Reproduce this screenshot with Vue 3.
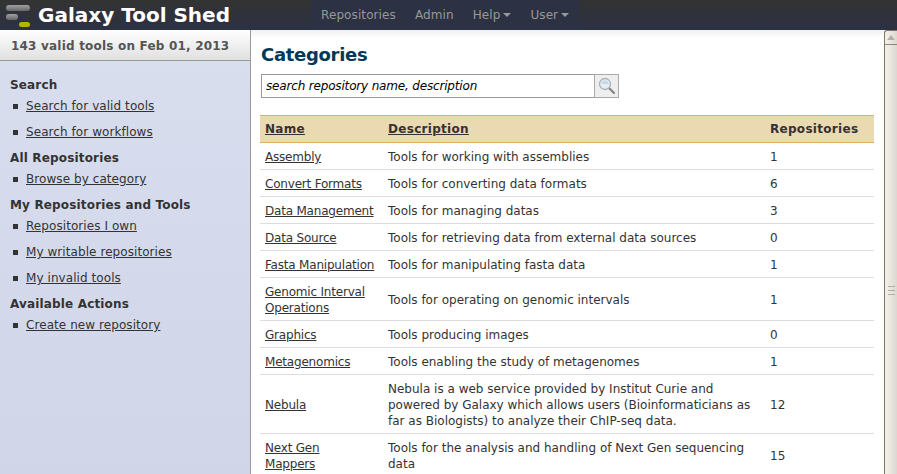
<script setup>
// sidebar groups
const groups = [
  { title: 'Search', links: ['Search for valid tools', 'Search for workflows'] },
  { title: 'All Repositories', links: ['Browse by category'] },
  { title: 'My Repositories and Tools', links: ['Repositories I own', 'My writable repositories', 'My invalid tools'] },
  { title: 'Available Actions', links: ['Create new repository'] }
]

// category rows
const categories = [
  { name: 'Assembly', desc: 'Tools for working with assemblies', count: 1 },
  { name: 'Convert Formats', desc: 'Tools for converting data formats', count: 6 },
  { name: 'Data Management', desc: 'Tools for managing datas', count: 3 },
  { name: 'Data Source', desc: 'Tools for retrieving data from external data sources', count: 0 },
  { name: 'Fasta Manipulation', desc: 'Tools for manipulating fasta data', count: 1 },
  { name: 'Genomic Interval Operations', desc: 'Tools for operating on genomic intervals', count: 1 },
  { name: 'Graphics', desc: 'Tools producing images', count: 0 },
  { name: 'Metagenomics', desc: 'Tools enabling the study of metagenomes', count: 1 },
  { name: 'Nebula', desc: 'Nebula is a web service provided by Institut Curie and powered by Galaxy which allows users (Bioinformaticians as far as Biologists) to analyze their ChIP-seq data.', count: 12 },
  { name: 'Next Gen\nMappers', desc: 'Tools for the analysis and handling of Next Gen sequencing data', count: 15 }
]
</script>

<template>
  <div class="page">
    <header class="masthead">
      <div class="brand">
        <svg class="logo" width="32" height="26" viewBox="0 0 32 26">
          <defs>
            <linearGradient id="bar" x1="0" y1="0" x2="0" y2="1">
              <stop offset="0" stop-color="#a0a0a0" />
              <stop offset="1" stop-color="#666666" />
            </linearGradient>
          </defs>
          <rect x="6" y="3" width="24" height="6" rx="3" fill="url(#bar)" />
          <rect x="6" y="12" width="12" height="6" rx="3" fill="url(#bar)" />
          <rect x="19" y="20" width="11" height="5" rx="2.5" fill="#b5b500" />
        </svg>
        <span>Galaxy Tool Shed</span>
      </div>
      <nav class="nav">
        <a>Repositories</a>
        <a>Admin</a>
        <a>Help<i class="caret"></i></a>
        <a>User<i class="caret"></i></a>
      </nav>
    </header>

    <div class="body-row">
      <aside class="sidebar">
        <div class="side-head">143 valid tools on Feb 01, 2013</div>
        <div class="side-body">
          <div v-for="g in groups" :key="g.title" class="group">
            <h4>{{ g.title }}</h4>
            <ul>
              <li v-for="l in g.links" :key="l"><a>{{ l }}</a></li>
            </ul>
          </div>
        </div>
      </aside>

      <main class="center">
        <h2>Categories</h2>
        <div class="search">
          <div class="search-input">search repository name, description</div>
          <div class="search-btn">
            <svg width="20" height="20" viewBox="0 0 20 20">
              <line x1="11.5" y1="11.5" x2="17" y2="17" stroke="#8a8a8a" stroke-width="2.4" stroke-linecap="round" />
              <circle cx="8" cy="8" r="5.5" fill="#e4eef6" stroke="#a5b0b8" stroke-width="1.3" />
              <path d="M4.5 8a3.5 3.5 0 0 1 7 0" fill="#c5d8e8" />
            </svg>
          </div>
        </div>

        <table class="grid">
          <thead>
            <tr>
              <th class="col-name"><a>Name</a></th>
              <th class="col-desc"><a>Description</a></th>
              <th class="col-count">Repositories</th>
            </tr>
          </thead>
          <tbody>
            <tr v-for="c in categories" :key="c.name">
              <td class="name"><a>{{ c.name }}</a></td>
              <td>{{ c.desc }}</td>
              <td>{{ c.count }}</td>
            </tr>
          </tbody>
        </table>
      </main>

      <div class="scrollbar">
        <div class="arrow"><i></i></div>
        <div class="thumb">
          <div class="grip"></div>
        </div>
      </div>
    </div>
  </div>
</template>

<style>
html, body {
  margin: 0;
  height: 100%;
  overflow: hidden;
}
</style>

<style scoped>
.page {
  width: 897px;
  height: 474px;
  overflow: hidden;
  display: flex;
  flex-direction: column;
  font-family: "DejaVu Sans", sans-serif;
  font-size: 12px;
  line-height: 16px;
  color: #333;
  background: #fff;
}

/* top bar */
.masthead {
  flex: none;
  height: 30px;
  display: flex;
  background: linear-gradient(#333333, #2c3143);
}
.brand {
  width: 311px;
  display: flex;
  align-items: center;
  color: #fff;
  font-weight: bold;
  font-size: 20px;
}
.logo {
  margin-right: 6px;
  flex: none;
}
.nav {
  width: 268px;
  display: flex;
  align-items: center;
  padding-left: 10px;
  box-sizing: border-box;
  background: #2c3143;
  color: #999;
  letter-spacing: 0.1px;
}
.nav a {
  margin-right: 19px;
  white-space: nowrap;
}
.caret {
  display: inline-block;
  margin-left: 3px;
  vertical-align: 2px;
  border-left: 4px solid transparent;
  border-right: 4px solid transparent;
  border-top: 4px solid #999;
}

.body-row {
  flex: 1;
  display: flex;
  min-height: 0;
}

/* left panel */
.sidebar {
  flex: none;
  width: 250px;
  border-right: 1px solid #999;
  display: flex;
  flex-direction: column;
  background: linear-gradient(#d8deee, #d0d6e8);
}
.side-head {
  height: 30px;
  line-height: 33px;
  padding-left: 11px;
  border-bottom: 1px solid #999;
  background: linear-gradient(#ffffff, #e0e0e0);
  font-weight: bold;
  color: #555;
  letter-spacing: 0.2px;
}
.side-body {
  padding-top: 16px;
}
.group h4 {
  margin: 0 0 5px 10px;
  font-size: 12px;
  line-height: 16px;
  font-weight: bold;
  letter-spacing: 0.16px;
}
.group ul {
  list-style: none;
  margin: 0 0 10px;
  padding: 0;
}
.group li {
  position: relative;
  padding-left: 26px;
  margin-bottom: 10px;
  letter-spacing: 0.07px;
}
.group li:last-child {
  margin-bottom: 0;
}
.group li::before {
  content: "";
  position: absolute;
  left: 13px;
  top: 6px;
  width: 5px;
  height: 5px;
  background: #333;
}
.group a {
  text-decoration: underline;
}

/* main content */
.center {
  flex: 1;
  min-width: 0;
  padding: 0 10px;
  background: linear-gradient(#f0f0f0, #ffffff 8px);
}
.center h2 {
  margin: 14px 0 9px;
  font-size: 18px;
  line-height: 21px;
  color: #023858;
  letter-spacing: -0.3px;
}
.search {
  display: flex;
  height: 24px;
}
.search-input {
  width: 333px;
  box-sizing: border-box;
  border: 1px solid #999;
  border-right: none;
  padding-left: 4px;
  line-height: 22px;
  font-style: italic;
  color: #000;
  background: #fff;
  letter-spacing: -0.17px;
}
.search-btn {
  width: 25px;
  box-sizing: border-box;
  border: 1px solid #aaa;
  background: #eee;
  display: flex;
  align-items: center;
  justify-content: center;
}
.grid {
  margin: 17px 0 0 -1px;
  width: 614px;
  border-collapse: collapse;
  table-layout: fixed;
}
.grid th {
  height: 26px;
  padding: 0 5px;
  text-align: left;
  font-weight: bold;
  background: #ebd9b2;
  border-top: 1px solid #d8b365;
  border-bottom: 1px solid #d8b365;
  letter-spacing: 0.3px;
}
.grid th a {
  text-decoration: underline;
}
.col-name { width: 113px; }
.col-desc { width: 372px; }
.grid td {
  padding: 6px 5px 4px;
  border-bottom: 1px solid #dddddd;
  vertical-align: middle;
}
.grid td a {
  text-decoration: underline;
}
.grid td.name {
  white-space: pre-line;
  letter-spacing: -0.2px;
}

/* fake scrollbar */
.scrollbar {
  flex: none;
  width: 13px;
  box-sizing: border-box;
  border-left: 1px solid #7f7562;
  border-top: 1px solid #7f7562;
  border-top-left-radius: 3px;
  background: linear-gradient(90deg, #f4f1ec, #dcd8d0);
}
.arrow {
  height: 13px;
  border-bottom: 1px solid #8f8778;
  display: flex;
  align-items: center;
  justify-content: center;
}
.arrow i {
  border-left: 4px solid transparent;
  border-right: 4px solid transparent;
  border-bottom: 5px solid #b5b0a5;
}
.thumb {
  height: 490px;
  display: flex;
  align-items: center;
  justify-content: center;
}
.grip {
  width: 7px;
  height: 7px;
  border-top: 1px solid #b5ad9c;
  border-bottom: 1px solid #b5ad9c;
  background: linear-gradient(#b5ad9c, #b5ad9c) center / 100% 1px no-repeat;
}
</style>
